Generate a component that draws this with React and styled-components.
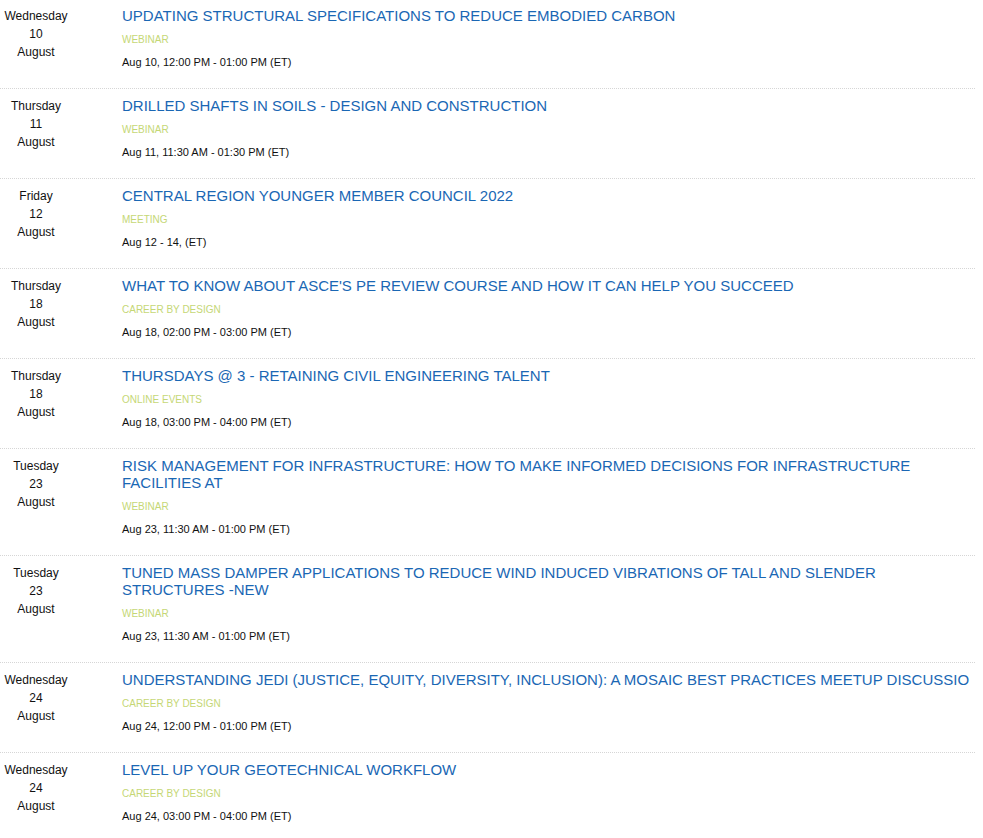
import styled, { createGlobalStyle } from 'styled-components';

const GlobalStyle = createGlobalStyle`
	body {
		margin: 0;
		background: #fff;
		font-family: 'Liberation Sans', Arial, sans-serif;
	}
`;

const List = styled.div`
	width: 975px;
`;

const Row = styled.div`
	display: flex;
	align-items: flex-start;
	padding: 8px 0 19px;
	border-bottom: 1px dotted #d6d6d6;
	&:first-child {
		padding-top: 7px;
	}
	&:last-child {
		border-bottom: none;
	}
`;

const DateCol = styled.div`
	width: 72px;
	flex-shrink: 0;
	display: flex;
	flex-direction: column;
	align-items: center;
	font-size: 12px;
	line-height: 18px;
	color: #111;
`;

const Info = styled.div`
	flex: 1;
	min-width: 0;
	margin-left: 50px;
	display: flex;
	flex-direction: column;
`;

const Title = styled.a`
	font-size: 15px;
	line-height: 17px;
	color: #1a67b4;
	text-decoration: none;
	margin-bottom: 10px;
	cursor: pointer;
`;

const Category = styled.span`
	font-size: 10px;
	line-height: 12px;
	color: #c5d775;
	text-transform: uppercase;
	margin-bottom: 10px;
`;

const Time = styled.span`
	font-size: 11px;
	line-height: 13px;
	color: #111;
`;

const events = [
	['Wednesday', 10, 'UPDATING STRUCTURAL SPECIFICATIONS TO REDUCE EMBODIED CARBON', 'Webinar', 'Aug 10, 12:00 PM - 01:00 PM (ET)'],
	['Thursday', 11, 'DRILLED SHAFTS IN SOILS - DESIGN AND CONSTRUCTION', 'Webinar', 'Aug 11, 11:30 AM - 01:30 PM (ET)'],
	['Friday', 12, 'CENTRAL REGION YOUNGER MEMBER COUNCIL 2022', 'Meeting', 'Aug 12 - 14, (ET)'],
	['Thursday', 18, "WHAT TO KNOW ABOUT ASCE'S PE REVIEW COURSE AND HOW IT CAN HELP YOU SUCCEED", 'Career by Design', 'Aug 18, 02:00 PM - 03:00 PM (ET)'],
	['Thursday', 18, 'THURSDAYS @ 3 - RETAINING CIVIL ENGINEERING TALENT', 'Online Events', 'Aug 18, 03:00 PM - 04:00 PM (ET)'],
	['Tuesday', 23, 'RISK MANAGEMENT FOR INFRASTRUCTURE: HOW TO MAKE INFORMED DECISIONS FOR INFRASTRUCTURE FACILITIES AT', 'Webinar', 'Aug 23, 11:30 AM - 01:00 PM (ET)'],
	['Tuesday', 23, 'TUNED MASS DAMPER APPLICATIONS TO REDUCE WIND INDUCED VIBRATIONS OF TALL AND SLENDER STRUCTURES -NEW', 'Webinar', 'Aug 23, 11:30 AM - 01:00 PM (ET)'],
	['Wednesday', 24, 'UNDERSTANDING JEDI (JUSTICE, EQUITY, DIVERSITY, INCLUSION): A MOSAIC BEST PRACTICES MEETUP DISCUSSIO', 'Career by Design', 'Aug 24, 12:00 PM - 01:00 PM (ET)'],
	['Wednesday', 24, 'LEVEL UP YOUR GEOTECHNICAL WORKFLOW', 'Career by Design', 'Aug 24, 03:00 PM - 04:00 PM (ET)'],
];

export default function App() {
	return (
		<>
			<GlobalStyle />
			<List>
				{events.map(([day, num, title, cat, time], i) => (
					<Row key={i}>
						<DateCol>
							<span>{day}</span>
							<span>{num}</span>
							<span>August</span>
						</DateCol>
						<Info>
							<Title>{title}</Title>
							<Category>{cat}</Category>
							<Time>{time}</Time>
						</Info>
					</Row>
				))}
			</List>
		</>
	);
}
